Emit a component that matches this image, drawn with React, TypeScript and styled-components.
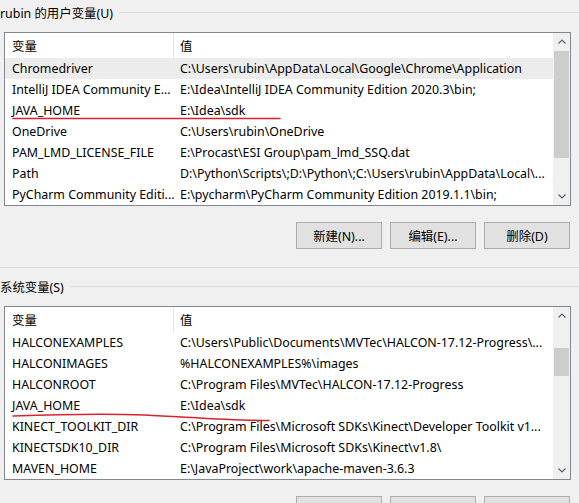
import React from 'react';
import styled, { createGlobalStyle } from 'styled-components';

const GlobalStyle = createGlobalStyle`
  html, body {
    margin: 0;
    padding: 0;
    background: #f0f0f0;
    overflow: hidden;
  }
  body {
    font-family: 'Noto Sans', 'Noto Sans CJK SC', sans-serif;
    font-size: 12.4px;
    color: #000;
  }
`;

const Page = styled.div`
  width: 579px;
  height: 503px;
  overflow: hidden;
  background: #f0f0f0;
`;

const Group = styled.section<{ $top: number }>`
  padding-top: ${(p) => p.$top}px;
`;

const Legend = styled.div`
  display: flex;
  align-items: center;
  height: 25px;
  white-space: nowrap;

  &::after {
    content: '';
    flex: 1;
    height: 1px;
    margin-left: 6px;
    background: #dcdcdc;
  }
`;

const ListBox = styled.div`
  position: relative;
  display: flex;
  margin: 7px 0 0 4px;
  width: 565px;
  height: 172px;
  border: 1px solid #828790;
  background: #fff;
`;

const Table = styled.div`
  flex: 1;
  overflow: hidden;
`;

const Row = styled.div<{ $header?: boolean; $hot?: boolean }>`
  display: grid;
  grid-template-columns: 169px 1fr;
  height: ${(p) => (p.$header ? 25 : 21)}px;
  align-items: center;
  background: ${(p) => (p.$hot ? '#ececec' : '#fff')};
`;

const Cell = styled.div<{ $divider?: boolean }>`
  height: 100%;
  display: flex;
  align-items: center;
  padding-left: 7px;
  white-space: nowrap;
  overflow: hidden;
  border-right: ${(p) => (p.$divider ? '1px solid #e5e5e5' : 'none')};
`;

const ValueCell = styled(Cell)`
  padding-left: 6px;
`;

const ScrollBar = styled.div`
  width: 17px;
  display: flex;
  flex-direction: column;
  background: #f0f0f0;
`;

const Arrow = styled.div`
  height: 17px;
  display: flex;
  align-items: center;
  justify-content: center;
`;

const Track = styled.div`
  flex: 1;
  position: relative;
`;

const Thumb = styled.div`
  position: absolute;
  left: 1px;
  right: 1px;
  background: #cdcdcd;
`;

const Mark = styled.svg`
  position: absolute;
  left: 0;
  top: 0;
  pointer-events: none;
  overflow: visible;
`;

const ButtonRow = styled.div`
  display: flex;
  justify-content: flex-end;
  gap: 8px;
  padding: 16px 9px 0 0;
`;

const Button = styled.button`
  width: 86px;
  height: 27px;
  padding: 0;
  border: 1px solid #adadad;
  background: #e1e1e1;
  font-family: inherit;
  font-size: 12.4px;
  color: #000;
`;

const Separator = styled.div`
  height: 1px;
  margin-top: 18px;
  background: #dcdcdc;
`;

const Chevron = ({ up }: { up?: boolean }) => (
  <svg width="8" height="5" viewBox="0 0 8 5">
    <path
      d={up ? 'M0.5 4.5 L4 1 L7.5 4.5' : 'M0.5 0.5 L4 4 L7.5 0.5'}
      fill="none"
      stroke="#606060"
      strokeWidth="1.2"
    />
  </svg>
);

type Variable = [string, string];

const userVars: Variable[] = [
  ['Chromedriver', 'C:\\Users\\rubin\\AppData\\Local\\Google\\Chrome\\Application'],
  ['IntelliJ IDEA Community E...', 'E:\\Idea\\IntelliJ IDEA Community Edition 2020.3\\bin;'],
  ['JAVA_HOME', 'E:\\Idea\\sdk'],
  ['OneDrive', 'C:\\Users\\rubin\\OneDrive'],
  ['PAM_LMD_LICENSE_FILE', 'E:\\Procast\\ESI Group\\pam_lmd_SSQ.dat'],
  ['Path', 'D:\\Python\\Scripts\\;D:\\Python\\;C:\\Users\\rubin\\AppData\\Local\\...'],
  ['PyCharm Community Editi...', 'E:\\pycharm\\PyCharm Community Edition 2019.1.1\\bin;'],
];

const systemVars: Variable[] = [
  ['HALCONEXAMPLES', 'C:\\Users\\Public\\Documents\\MVTec\\HALCON-17.12-Progress\\...'],
  ['HALCONIMAGES', '%HALCONEXAMPLES%\\images'],
  ['HALCONROOT', 'C:\\Program Files\\MVTec\\HALCON-17.12-Progress'],
  ['JAVA_HOME', 'E:\\Idea\\sdk'],
  ['KINECT_TOOLKIT_DIR', 'C:\\Program Files\\Microsoft SDKs\\Kinect\\Developer Toolkit v1...'],
  ['KINECTSDK10_DIR', 'C:\\Program Files\\Microsoft SDKs\\Kinect\\v1.8\\'],
  ['MAVEN_HOME', 'E:\\JavaProject\\work\\apache-maven-3.6.3'],
];

type ListProps = {
  rows: Variable[];
  hot?: number;
  thumb: { top: number; height: number };
  mark: string;
};

const VariableList = ({ rows, hot, thumb, mark }: ListProps) => (
  <ListBox>
    <Table>
      <Row $header>
        <Cell $divider>变量</Cell>
        <ValueCell>值</ValueCell>
      </Row>
      {rows.map(([name, value], i) => (
        <Row key={name} $hot={i === hot}>
          <Cell>{name}</Cell>
          <ValueCell>{value}</ValueCell>
        </Row>
      ))}
    </Table>
    <ScrollBar>
      <Arrow>
        <Chevron up />
      </Arrow>
      <Track>
        <Thumb style={{ top: thumb.top, height: thumb.height }} />
      </Track>
      <Arrow>
        <Chevron />
      </Arrow>
    </ScrollBar>
    <Mark width="565" height="172">
      <path d={mark} fill="none" stroke="#d8232f" strokeWidth="1.6" strokeLinecap="round" />
    </Mark>
  </ListBox>
);

const Buttons = () => (
  <ButtonRow>
    <Button>新建(N)...</Button>
    <Button>编辑(E)...</Button>
    <Button>删除(D)</Button>
  </ButtonRow>
);

export default function App() {
  return (
    <Page>
      <GlobalStyle />
      <Group $top={0}>
        <Legend>rubin 的用户变量(U)</Legend>
        <VariableList
          rows={userVars}
          hot={0}
          thumb={{ top: 1, height: 107 }}
          mark="M8 85.5 C 80 85, 200 86, 275 85.5"
        />
        <Buttons />
      </Group>
      <Separator />
      <Group $top={6}>
        <Legend>系统变量(S)</Legend>
        <VariableList
          rows={systemVars}
          thumb={{ top: 24, height: 28 }}
          mark="M8 109 C 50 107.5, 100 106.5, 140 108 C 190 110.5, 230 113.5, 264 113.5"
        />
        <Buttons />
      </Group>
    </Page>
  );
}
